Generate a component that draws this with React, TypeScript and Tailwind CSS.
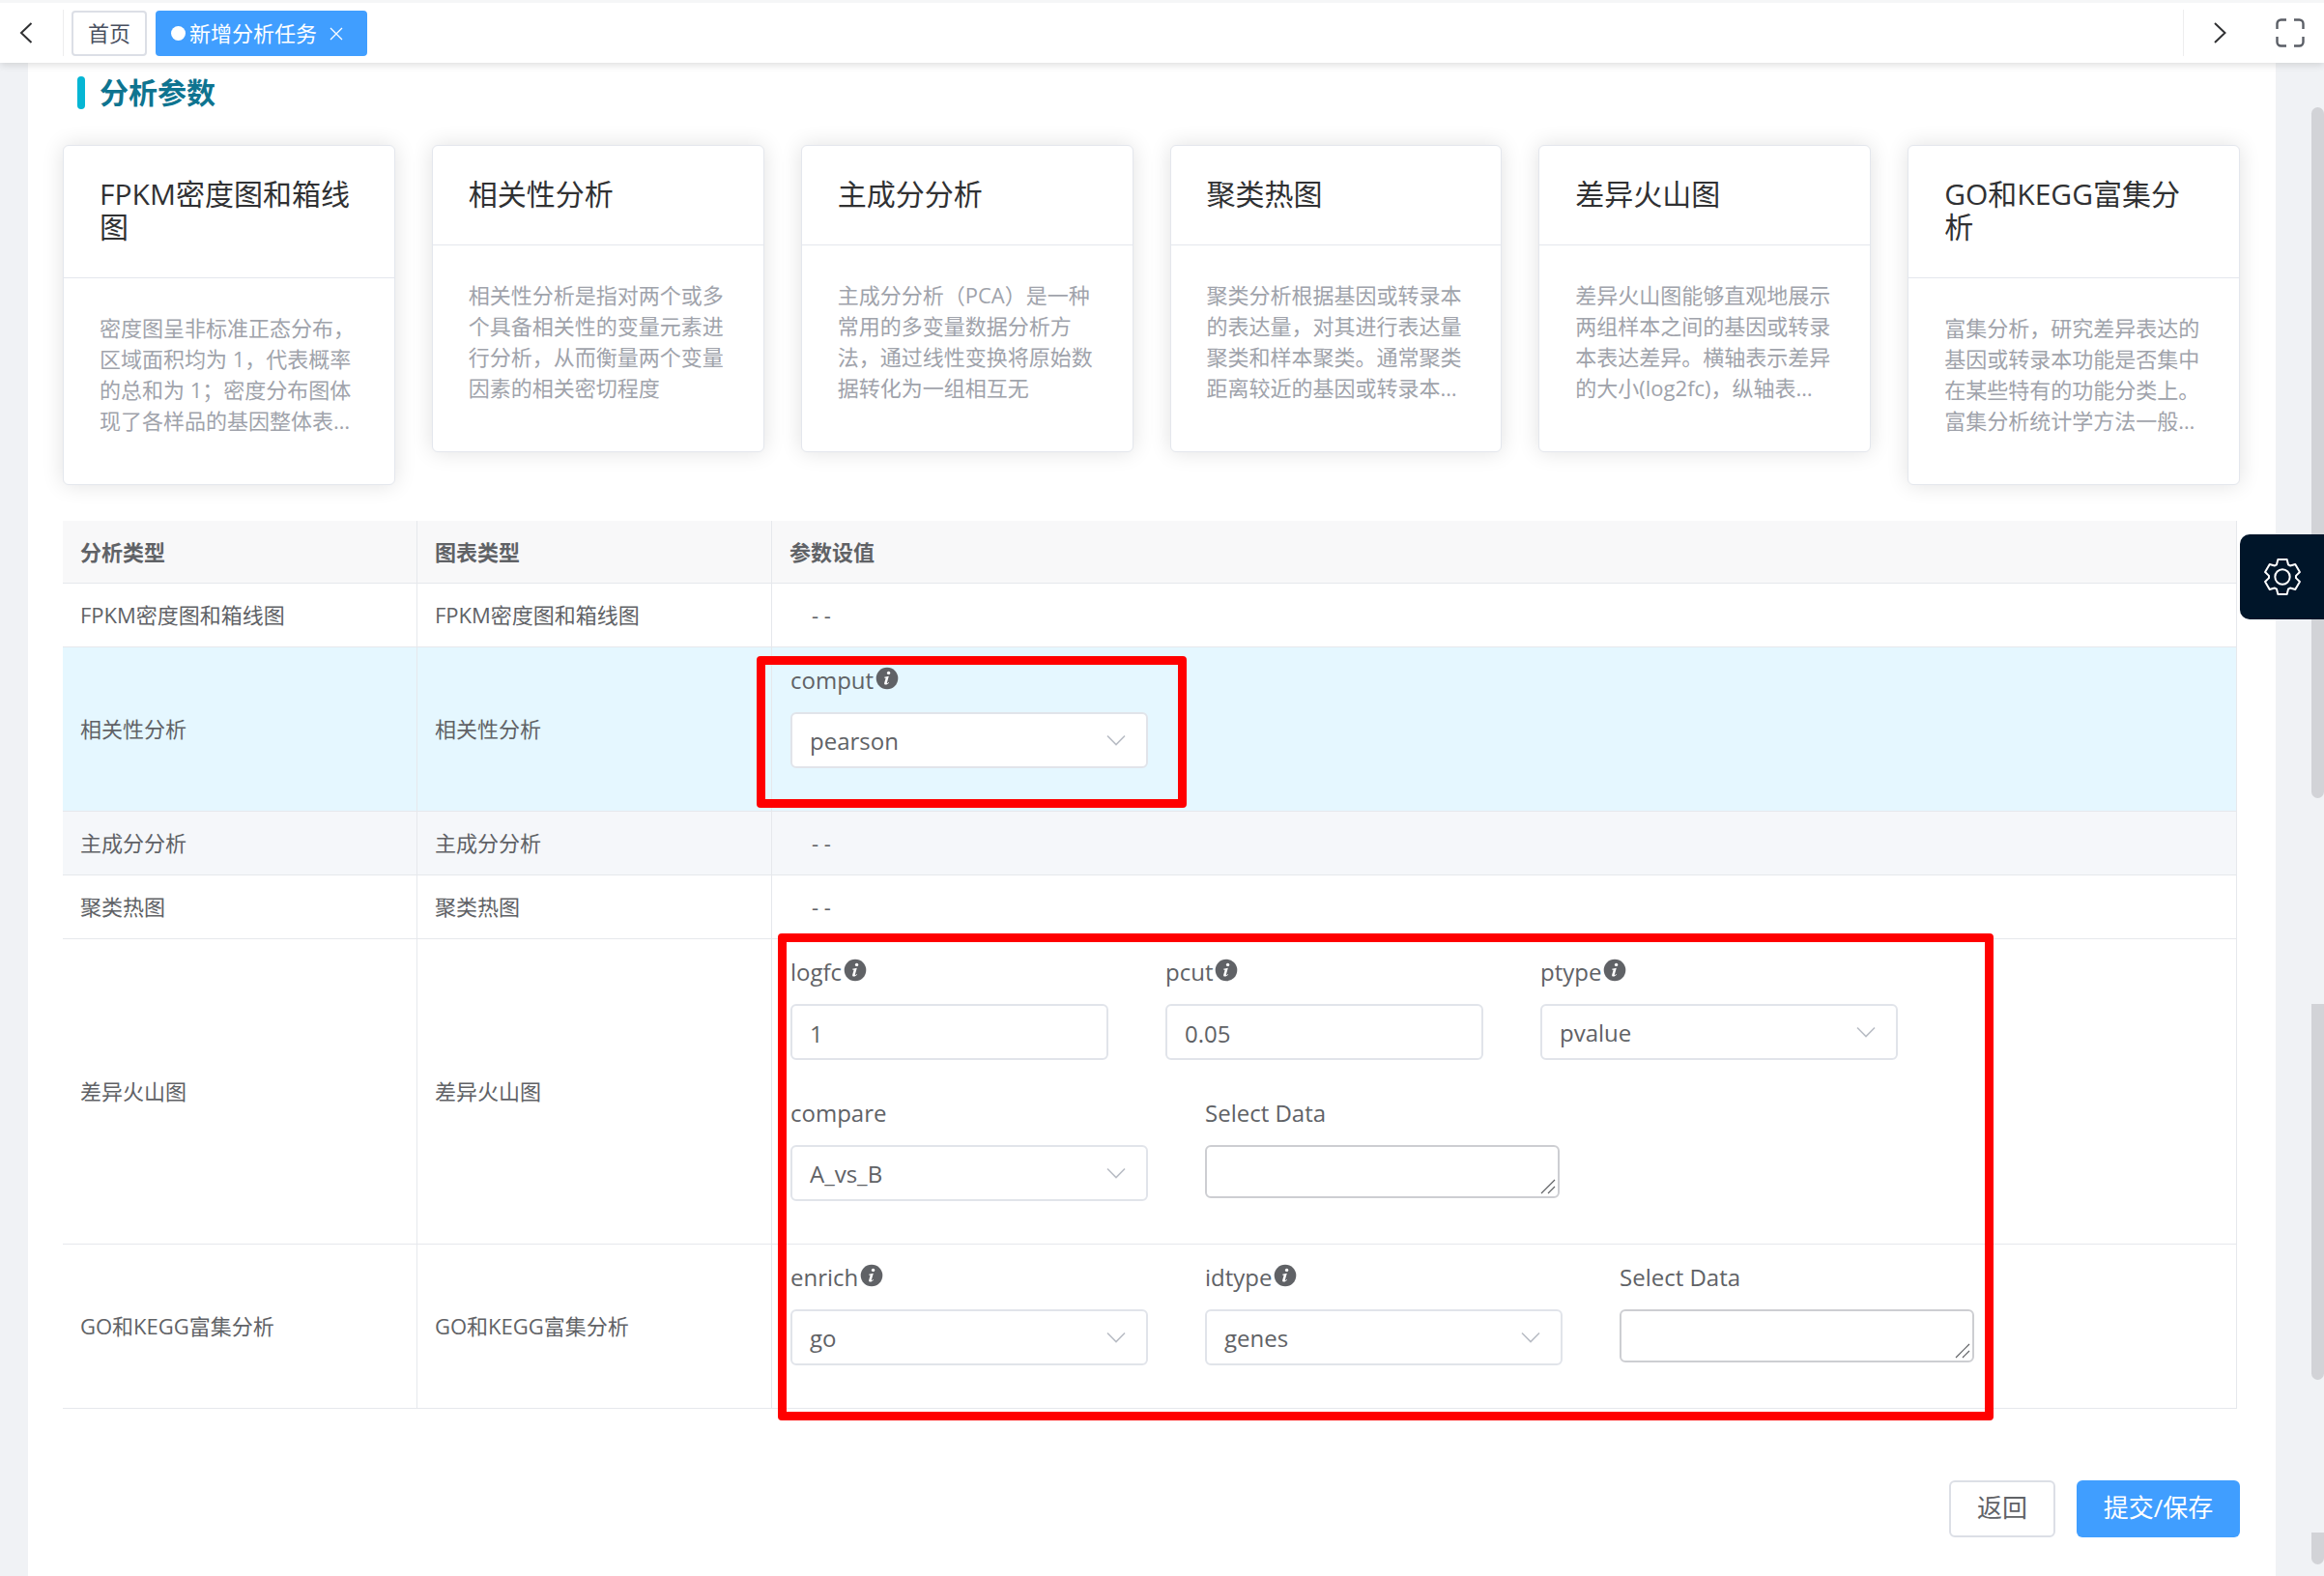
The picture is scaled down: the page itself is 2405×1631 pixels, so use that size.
import React, { useState } from "react";

const cards = [
  {
    title: "FPKM密度图和箱线图",
    text: "密度图呈非标准正态分布，区域面积均为 1，代表概率的总和为 1；密度分布图体现了各样品的基因整体表…",
  },
  {
    title: "相关性分析",
    text: "相关性分析是指对两个或多个具备相关性的变量元素进行分析，从而衡量两个变量因素的相关密切程度",
  },
  {
    title: "主成分分析",
    text: "主成分分析（PCA）是一种常用的多变量数据分析方法，通过线性变换将原始数据转化为一组相互无",
  },
  {
    title: "聚类热图",
    text: "聚类分析根据基因或转录本的表达量，对其进行表达量聚类和样本聚类。通常聚类距离较近的基因或转录本…",
  },
  {
    title: "差异火山图",
    text: "差异火山图能够直观地展示两组样本之间的基因或转录本表达差异。横轴表示差异的大小(log2fc)，纵轴表…",
  },
  {
    title: "GO和KEGG富集分析",
    text: "富集分析，研究差异表达的基因或转录本功能是否集中在某些特有的功能分类上。富集分析统计学方法一般…",
  },
];

function InfoIcon() {
  return (
    <svg viewBox="0 0 24 24" className="mb-1 ml-0.5 size-6" aria-hidden="true">
      <circle cx="12" cy="12" r="11.3" fill="#606266" />
      <circle cx="13.6" cy="6.4" r="1.7" fill="#fff" />
      <path
        d="M9.2 10.8c1.6-.3 2.9-.7 4.6-1.1l-2 7.1c-.1.5.3.5.7.1l.9-1 .5.5c-1 1.4-2.1 2.2-3.4 2.2-1.2 0-1.6-.8-1.3-1.9l1.3-4.5c.1-.5-.1-.7-.6-.7h-.9z"
        fill="#fff"
      />
    </svg>
  );
}

function GearIcon() {
  return (
    <svg
      viewBox="-60 -60 120 120"
      className="size-10"
      fill="none"
      stroke="currentColor"
      strokeWidth="6"
      strokeLinejoin="round"
    >
      <path d="M-18-38L-14-54H14L18-38L23.900-34.600L39.800-39.100L53.800-14.900L41.900-3.400V3.400L53.800 14.900L39.800 39.100L23.900 34.600L18 38L14 54H-14L-18 38L-23.900 34.600L-39.800 39.100L-53.800 14.900L-41.900 3.400V-3.400L-53.800-14.900L-39.800-39.100L-23.900-34.600Z" />
      <circle r="23" />
    </svg>
  );
}

function Label({ id, text, info }: { id: string; text: string; info?: boolean }) {
  return (
    <div className="mb-[13px] flex h-10 items-center">
      <label htmlFor={id}>{text}</label>
      {info && <InfoIcon />}
    </div>
  );
}

function SelectField({ id, label, value, info }: { id: string; label: string; value: string; info?: boolean }) {
  return (
    <div>
      <Label id={id} text={label} info={info} />
      <div className="relative w-[370px]">
        <select
          id={id}
          defaultValue={value}
          className="block h-[58px] w-full appearance-none rounded-md border-2 border-[#e1e4ea] bg-white px-[18px] pt-0.5 outline-none"
        >
          <option>{value}</option>
        </select>
        <svg
          viewBox="0 0 20 12"
          className="pointer-events-none absolute right-[23px] top-[23px] h-3 w-5"
          fill="none"
          stroke="#b9bdc5"
          strokeWidth="1.6"
        >
          <path d="M1 1.5l9 9 9-9" />
        </svg>
      </div>
    </div>
  );
}

function InputField({ id, label, value }: { id: string; label: string; value: string }) {
  return (
    <div>
      <Label id={id} text={label} info />
      <input
        id={id}
        defaultValue={value}
        className="block h-[58px] w-[329px] rounded-md border-2 border-[#e1e4ea] bg-white px-[18px] pt-0.5 outline-none"
      />
    </div>
  );
}

function DataField({ id }: { id: string }) {
  return (
    <div>
      <Label id={id} text="Select Data" />
      <div className="relative w-[367px]">
        <textarea
          id={id}
          className="block h-[55px] w-full resize-none rounded-md border-2 border-[#cdced2] bg-white outline-none"
        />
        <svg
          viewBox="0 0 16 16"
          className="pointer-events-none absolute bottom-1 right-1 size-4"
          fill="none"
          stroke="#606266"
          strokeWidth="1.2"
        >
          <path d="M1 15L15 1M8 15l7-7" />
        </svg>
      </div>
    </div>
  );
}

function Row({ name, className = "", children }: { name: string; className?: string; children?: React.ReactNode }) {
  return (
    <tr className={className}>
      <td className="h-[66px] border-b border-r border-[#e6e8ec] px-[18px]">{name}</td>
      <td className="border-b border-r border-[#e6e8ec] px-[18px]">{name}</td>
      <td className="border-b border-r border-[#e6e8ec] px-[19px]">
        {children ? (
          <div className="relative flex flex-col gap-[35px] pb-11 pt-[14px] text-2xl">{children}</div>
        ) : (
          <span className="pl-[22px]">- -</span>
        )}
      </td>
    </tr>
  );
}

function TagsBar() {
  return (
    <header className="flex h-[65px] items-center border-t-[3px] border-[#f5f6f7] bg-white shadow-[0_2px_8px_rgba(0,0,0,0.14)]">
      <button aria-label="向左" className="flex h-12 w-[66px] items-center border-r border-[#ededee] pl-5">
        <svg viewBox="0 0 14 22" className="h-[22px] w-[14px]" fill="none" stroke="#303133" strokeWidth="2">
          <path d="M12.5 1L2 11l10.5 10" />
        </svg>
      </button>
      <nav className="flex flex-1 items-center gap-[9px] pl-2">
        <a href="#" className="flex h-[47px] items-center rounded border-2 border-[#dcdfe6] px-[15px] text-[#495060]">
          首页
        </a>
        <a href="#" className="flex h-[47px] items-center rounded bg-[#409eff] pl-4 pr-[25px] text-white">
          <span className="mr-1 size-[15px] rounded-full bg-white" />
          新增分析任务
          <svg viewBox="0 0 14 14" className="ml-[13px] mt-0.5 size-[14px]" fill="none" stroke="#fff" strokeWidth="1.3">
            <path d="M1 1l12 12M13 1L1 13" />
          </svg>
        </a>
      </nav>
      <button aria-label="向右" className="flex h-12 w-[76px] items-center justify-center border-l border-[#ededee]">
        <svg viewBox="0 0 14 22" className="h-[22px] w-[14px]" fill="none" stroke="#303133" strokeWidth="2">
          <path d="M1 1L11.5 11L1 21" />
        </svg>
      </button>
      <button aria-label="全屏" className="mx-5 size-[30px]">
        <svg viewBox="0 0 30 30" className="size-[30px]" fill="none" stroke="#5a5e66" strokeWidth="2.4">
          <path d="M1.5 11V5.5a4 4 0 0 1 4-4H11M19 1.5h5.5a4 4 0 0 1 4 4V11M28.5 19v5.5a4 4 0 0 1-4 4H19M11 28.5H5.5a4 4 0 0 1-4-4V19" />
        </svg>
      </button>
    </header>
  );
}

export default function App() {
  const [open, setOpen] = useState(false);
  return (
    <div className="relative min-h-screen bg-[#f0f2f5] font-['Open_Sans','Noto_Sans_CJK_SC',sans-serif] text-[22px] text-[#606266]">
      <div className="relative z-10">
        <TagsBar />
      </div>
      <main className="ml-[29px] mr-[50px] min-h-[calc(100vh-65px)] bg-white pl-9 pr-[37px] pt-[14px]">
        <h2 className="flex h-[34px] items-center gap-[15px] pl-[15px] text-3xl font-bold text-[#0e7490]">
          <span className="h-[34px] w-2 rounded-full bg-[#06b6d4]" />
          分析参数
        </h2>

        <section className="mt-[37px] grid grid-cols-6 items-start gap-[38px]">
          {cards.map((card) => (
            <article
              key={card.title}
              className="rounded-md border border-[#e4e7ed] bg-white shadow-[0_0_22px_rgba(0,0,0,0.12)]"
            >
              <h3 className="border-b border-[#e4e7ed] pb-[35px] pl-[37px] pr-10 pt-[33px] text-3xl leading-[34px] text-[#303133]">
                {card.title}
              </h3>
              <p className="px-[37px] pb-[50px] pt-[35px] leading-[32px] text-[#a0a3ab]">{card.text}</p>
            </article>
          ))}
        </section>

        <div className="mr-[3px] mt-[37px]">
          <table className="w-full table-fixed border-separate border-spacing-0 text-left">
            <colgroup>
              <col className="w-[367px]" />
              <col className="w-[367px]" />
              <col />
            </colgroup>
            <thead>
              <tr className="bg-[#f8f8f9]">
                <th className="h-[65px] border-b border-r border-[#e6e8ec] px-[18px]">分析类型</th>
                <th className="border-b border-r border-[#e6e8ec] px-[18px]">图表类型</th>
                <th className="border-b border-r border-[#e6e8ec] px-[18px]">参数设值</th>
              </tr>
            </thead>
            <tbody>
              <Row name="FPKM密度图和箱线图" />
              <Row name="相关性分析" className="bg-[#e5f7ff]">
                <SelectField id="comput" label="comput" value="pearson" info />
                <div className="pointer-events-none absolute -left-[35px] top-[9px] h-[157px] w-[445px] rounded border-[9px] border-[#ff0000]" />
              </Row>
              <Row name="主成分分析" className="bg-[#f5f7fa]" />
              <Row name="聚类热图" />
              <Row name="差异火山图">
                <div className="flex gap-[59px]">
                  <InputField id="logfc" label="logfc" value="1" />
                  <InputField id="pcut" label="pcut" value="0.05" />
                  <SelectField id="ptype" label="ptype" value="pvalue" info />
                </div>
                <div className="flex gap-[59px]">
                  <SelectField id="compare" label="compare" value="A_vs_B" />
                  <DataField id="compare-data" />
                </div>
                <div className="pointer-events-none absolute -left-[13px] -top-[6px] z-10 h-[504px] w-[1258px] rounded border-[9px] border-[#ff0000]" />
              </Row>
              <Row name="GO和KEGG富集分析">
                <div className="flex gap-[59px]">
                  <SelectField id="enrich" label="enrich" value="go" info />
                  <SelectField id="idtype" label="idtype" value="genes" info />
                  <DataField id="enrich-data" />
                </div>
              </Row>
            </tbody>
          </table>
        </div>

        <div className="mt-[74px] flex justify-end gap-[22px] pb-10 text-[26px]">
          <button className="h-[59px] w-[110px] rounded-md border-2 border-[#dcdfe6] bg-white pb-0.5">返回</button>
          <button className="h-[59px] w-[169px] rounded-md bg-[#409eff] pb-0.5 text-white">提交/保存</button>
        </div>
      </main>

      <div className="absolute right-0 top-[111px] h-[715px] w-[13px] rounded-full bg-[#d2d3d7]" />
      <div className="absolute right-0 top-[1039px] h-[389px] w-[13px] rounded-b-full bg-[#d2d3d7]" />
      <div className="absolute right-0 top-[1586px] h-[33px] w-[13px] rounded-b-full bg-[#d2d3d7]" />

      <button
        aria-label="设置"
        onClick={() => setOpen(!open)}
        className="absolute right-0 top-[553px] z-20 flex h-[88px] w-[87px] items-center justify-center rounded-l-[10px] bg-[#001529] text-white"
      >
        <GearIcon />
      </button>
    </div>
  );
}
